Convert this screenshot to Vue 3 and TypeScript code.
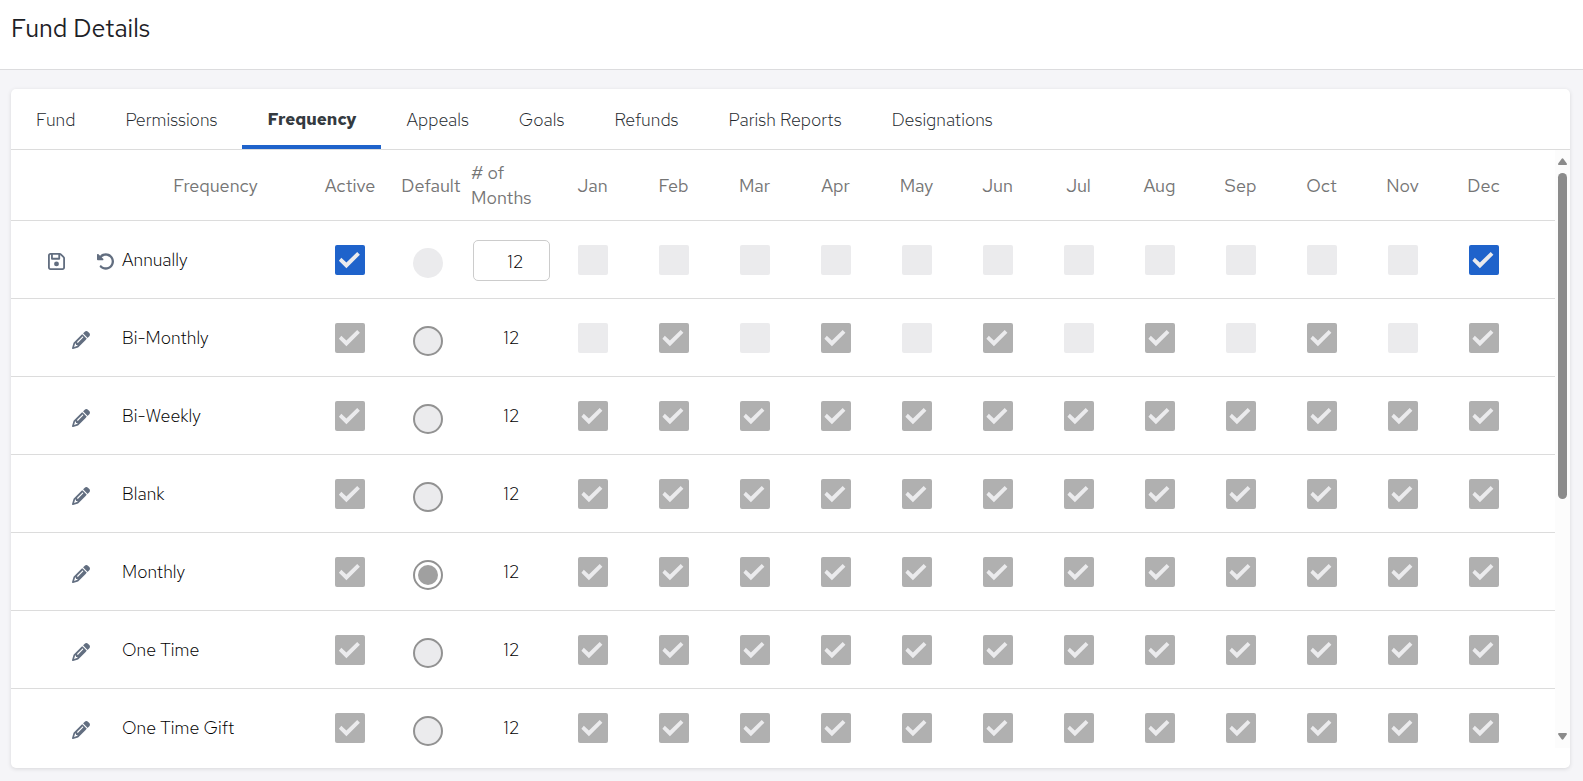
<script setup lang="ts">
import { ref } from 'vue'

interface Frequency {
  name: string
  months: string
  count: number
}

const monthNames = ['Jan', 'Feb', 'Mar', 'Apr', 'May', 'Jun', 'Jul', 'Aug', 'Sep', 'Oct', 'Nov', 'Dec']
const tabs = ['Fund', 'Permissions', 'Frequency', 'Appeals', 'Goals', 'Refunds', 'Parish Reports', 'Designations']
const activeTab = ref('Frequency')
const editing = ref('Annually')
const defaultFrequency = ref('Monthly')

// One digit per month: 1 marks a month in which the gift is taken.
const rows = ref<Frequency[]>([
  { name: 'Annually', months: '000000000001', count: 12 },
  { name: 'Bi-Monthly', months: '010101010101', count: 12 },
  { name: 'Bi-Weekly', months: '111111111111', count: 12 },
  { name: 'Blank', months: '111111111111', count: 12 },
  { name: 'Monthly', months: '111111111111', count: 12 },
  { name: 'One Time', months: '111111111111', count: 12 },
  { name: 'One Time Gift', months: '111111111111', count: 12 },
])
</script>

<template>
  <div class="page">
    <header class="page-header">
      <h1>Fund Details</h1>
    </header>
    <main class="card">
      <nav class="tabs" role="tablist">
        <button
          v-for="tab in tabs"
          :key="tab"
          type="button"
          role="tab"
          class="tab"
          :class="{ active: tab === activeTab }"
          :aria-selected="tab === activeTab"
          @click="activeTab = tab"
        >{{ tab }}</button>
      </nav>
      <div class="panel">
        <div class="scroller">
          <table>
            <colgroup>
              <col class="c-actions" />
              <col class="c-name" />
              <col class="c-active" />
              <col class="c-default" />
              <col class="c-count" />
              <col v-for="m in monthNames" :key="m" />
              <col class="c-tail" />
            </colgroup>
            <thead>
              <tr>
                <th></th>
                <th>Frequency</th>
                <th>Active</th>
                <th>Default</th>
                <th class="count-head"># of Months</th>
                <th v-for="m in monthNames" :key="m">{{ m }}</th>
                <th></th>
              </tr>
            </thead>
            <tbody>
              <tr v-for="row in rows" :key="row.name">
                <td class="actions">
                  <div class="action-list">
                    <template v-if="row.name === editing">
                      <button type="button" class="icon-button" aria-label="Save">
                        <svg class="icon" viewBox="0 32 448 448"><path d="M48 96V416c0 8.800 7.200 16 16 16H384c8.800 0 16-7.200 16-16V170.500c0-4.200-1.700-8.300-4.700-11.300l33.900-33.900c12 12 18.700 28.300 18.700 45.300V416c0 35.300-28.700 64-64 64H64c-35.300 0-64-28.700-64-64V96C0 60.700 28.700 32 64 32H309.500c17 0 33.300 6.700 45.300 18.700l74.500 74.500-33.900 33.900L320.800 84.700c-.3-.3-.5-.5-.8-.8V184c0 13.300-10.700 24-24 24H104c-13.300 0-24-10.700-24-24V80H64c-8.800 0-16 7.200-16 16zm80-16v80H272V80H128zm32 240a64 64 0 1 1 128 0 64 64 0 1 1-128 0z" /></svg>
                      </button>
                      <button type="button" class="icon-button" aria-label="Undo">
                        <svg class="icon" viewBox="16 32 464 448"><path d="M48.500 224H40c-13.300 0-24-10.700-24-24V72c0-9.700 5.800-18.500 14.800-22.200s19.300-1.700 26.200 5.200L98.600 96.600c87.600-86.500 228.700-86.200 315.800 1c87.500 87.500 87.500 229.300 0 316.800s-229.300 87.500-316.800 0c-12.500-12.500-12.500-32.800 0-45.300s32.800-12.500 45.300 0c62.500 62.500 163.800 62.500 226.300 0s62.500-163.800 0-226.300c-62.200-62.200-162.700-62.500-225.300-1L185 183c6.900 6.900 8.900 17.200 5.200 26.200s-12.500 14.800-22.200 14.800H48.500z" /></svg>
                      </button>
                    </template>
                    <button v-else type="button" class="icon-button" :aria-label="`Edit ${row.name}`" @click="editing = row.name">
                      <svg class="icon pencil" viewBox="0 0 512 512"><path d="M410.300 231l11.300-11.300-33.900-33.900-62.100-62.100L291.700 89.800l-11.300 11.300-22.600 22.600L58.600 322.900c-10.400 10.400-18 23.300-22.200 37.400L1 480.700c-2.500 8.400-.2 17.500 6.100 23.700s15.300 8.500 23.700 6.100l120.300-35.400c14.100-4.200 27-11.800 37.400-22.200L387.700 253.700 410.300 231zM160 399.400l-9.100 22.700c-4 3.100-8.500 5.400-13.300 6.900L59.400 452l23-78.100c1.400-4.900 3.800-9.400 6.900-13.300l22.700-9.100v32c0 8.800 7.200 16 16 16h32zM362.700 18.700L348.300 33.200 325.700 55.800 314.300 67.100l33.900 33.900 62.100 62.100 33.900 33.900 11.300-11.300 22.600-22.600 14.500-14.500c25-25 25-65.500 0-90.500L453.300 18.700c-25-25-65.500-25-90.500 0zm-47.400 168l-144 144c-6.200 6.200-16.400 6.200-22.600 0s-6.200-16.400 0-22.600l144-144c6.200-6.200 16.400-6.200 22.600 0s6.200 16.400 0 22.600z" /></svg>
                    </button>
                  </div>
                </td>
                <td class="name">{{ row.name }}</td>
                <td>
                  <input type="checkbox" class="check" checked :disabled="row.name !== editing" :aria-label="`${row.name} active`" />
                </td>
                <td class="default">
                  <input
                    v-model="defaultFrequency"
                    type="radio"
                    name="default-frequency"
                    class="radio"
                    :value="row.name"
                    :disabled="row.name !== editing"
                    :aria-label="`${row.name} is default`"
                  />
                </td>
                <td>
                  <input v-if="row.name === editing" v-model="row.count" type="text" class="count" aria-label="Number of months" />
                  <template v-else>{{ row.count }}</template>
                </td>
                <td v-for="(m, i) in monthNames" :key="m">
                  <input
                    type="checkbox"
                    class="check"
                    :checked="row.months[i] === '1'"
                    :disabled="row.name !== editing"
                    :aria-label="`${row.name} ${m}`"
                  />
                </td>
                <td></td>
              </tr>
            </tbody>
          </table>
        </div>
        <div class="scrollbar" aria-hidden="true">
          <svg class="arrow" viewBox="0 0 9 7"><path d="M3.500 1Q4.500-.5 5.500 1L8.800 5.500Q9.200 7 8 7H1Q-.2 7 .2 5.500Z" /></svg>
          <div class="track"><div class="thumb"></div></div>
          <svg class="arrow" viewBox="0 0 9 7"><path d="M3.500 6Q4.500 7.500 5.500 6L8.800 1.500Q9.200 0 8 0H1Q-.2 0 .2 1.500Z" /></svg>
        </div>
      </div>
    </main>
  </div>
</template>

<style>
body {
  background: #f5f5f8;
}
</style>

<style scoped>
.page {
  display: flex;
  flex-direction: column;
  height: 100vh;
  min-height: 400px;
  box-sizing: border-box;
  padding-bottom: 13px;
  background: #f5f5f8;
  color: #000;
  font-family: "Red Hat Text", Lato, "Liberation Sans", sans-serif;
  font-size: 18px;
  font-weight: 300;
  line-height: 25px;
}

.page-header {
  box-sizing: border-box;
  height: 70px;
  flex: none;
  padding: 12px 11px;
  background: #fff;
  border-bottom: 1px solid #dcdcde;
}

h1 {
  margin: 0;
  color: #1d2126;
  font-size: 25px;
  font-weight: 400;
  line-height: 34px;
}

.card {
  display: flex;
  flex: 1;
  flex-direction: column;
  min-height: 0;
  margin: 19px 13px 0 11px;
  padding-bottom: 20px;
  background: #fff;
  border-radius: 5px;
  box-shadow: 0 1px 4px rgba(0, 0, 0, 0.12);
}

.tabs {
  display: flex;
  flex: none;
  border-bottom: 1px solid #dcdcdc;
}

.tab {
  height: 60px;
  padding: 4px 25px 0;
  background: none;
  border: 0;
  border-bottom: 4px solid transparent;
  color: #23282d;
  font: inherit;
  white-space: nowrap;
  cursor: pointer;
}

.tab.active {
  border-bottom-color: #1f63cb;
  color: #343a40;
  font-size: 17px;
  font-weight: 700;
}

.panel {
  display: flex;
  flex: 1;
  min-height: 0;
}

.scroller {
  flex: 1;
  min-width: 0;
  overflow: auto;
  scrollbar-width: none;
}

table {
  width: 100%;
  min-width: 1200px;
  table-layout: fixed;
  border-collapse: separate;
  border-spacing: 0;
}

.c-actions { width: 111px; }
.c-name { width: 187px; }
.c-active { width: 82px; }
.c-default { width: 80px; }
.c-count { width: 81px; }
.c-tail { width: 31px; }

th {
  box-sizing: border-box;
  height: 71px;
  padding: 0;
  border-bottom: 1px solid #dcdcdc;
  color: #757575;
  font-weight: 400;
  text-align: center;
}

.count-head {
  text-align: left;
}

td {
  box-sizing: border-box;
  height: 78px;
  padding: 0;
  border-bottom: 1px solid #dcdcdc;
  text-align: center;
}

.name {
  text-align: left;
}

.actions {
  padding: 4px 0 0 29px;
}

.action-list {
  display: flex;
  align-items: center;
  justify-content: center;
  gap: 32px;
}

.icon-button {
  display: flex;
  padding: 0;
  background: none;
  border: 0;
  color: #626e80;
  cursor: pointer;
}

.icon {
  width: 17px;
  height: 17px;
  fill: currentColor;
}

.pencil {
  width: 18px;
  height: 18px;
}

.check,
.radio {
  display: inline-grid;
  place-items: center;
  box-sizing: border-box;
  width: 30px;
  height: 30px;
  margin: 0;
  appearance: none;
  background: #ebebed;
  vertical-align: middle;
}

.check {
  border-radius: 2px;
}

.check:checked {
  background: #1f63cb;
}

.check:checked:disabled {
  background: #b0b0b0;
}

.check:checked::before {
  content: "";
  width: 30px;
  height: 30px;
  background: #ebebed;
  clip-path: polygon(13% 54%, 21% 44%, 38% 60%, 74% 25%, 83% 34%, 38% 79%);
}

.default {
  padding: 6px 6px 0 0;
}

.radio {
  border-radius: 50%;
}

.radio:disabled {
  border: 2px solid #929292;
}

.radio:checked {
  background: #fff;
}

.radio:checked::before {
  content: "";
  width: 20px;
  height: 20px;
  border-radius: 50%;
  background: #a0a0a0;
}

.count {
  box-sizing: border-box;
  width: 77px;
  height: 41px;
  margin-top: 2px;
  padding: 2px 0 0 8px;
  background: #fff;
  border: 1px solid #ccc;
  border-radius: 5px;
  color: inherit;
  font: inherit;
  text-align: center;
  vertical-align: middle;
}

.scrollbar {
  display: flex;
  flex: none;
  flex-direction: column;
  align-items: center;
  gap: 8px;
  box-sizing: border-box;
  width: 15px;
  padding: 8px 0;
  background: #fcfcfc;
}

.arrow {
  flex: none;
  width: 9px;
  height: 7px;
  fill: #8b8b8b;
}

.track {
  flex: 1;
  width: 9px;
}

.thumb {
  height: 59%;
  border-radius: 5px;
  background: #8b8b8b;
}
</style>
